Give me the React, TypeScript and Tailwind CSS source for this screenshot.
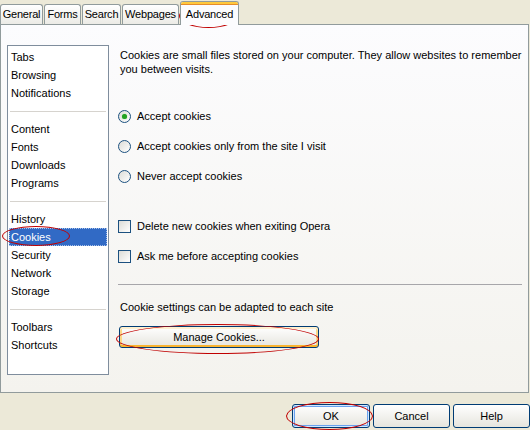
import React from "react";

const font = { fontFamily: '"Liberation Sans", Arial, sans-serif' };

const tabs = [
  { label: "General", w: "w-[43px]" },
  { label: "Forms", w: "w-[37px]" },
  { label: "Search", w: "w-[39px]" },
  { label: "Webpages", w: "w-[57px]" },
];

type Item = { label: string } | "sep";

const items: Item[] = [
  { label: "Tabs" },
  { label: "Browsing" },
  { label: "Notifications" },
  "sep",
  { label: "Content" },
  { label: "Fonts" },
  { label: "Downloads" },
  { label: "Programs" },
  "sep",
  { label: "History" },
  { label: "Cookies" },
  { label: "Security" },
  { label: "Network" },
  { label: "Storage" },
  "sep",
  { label: "Toolbars" },
  { label: "Shortcuts" },
];

function Radio({ checked, label }: { checked?: boolean; label: string }) {
  return (
    <div className="flex h-[16px] items-center">
      <span className="ml-[-2px] flex h-[13px] w-[13px] items-center justify-center rounded-full border border-[#1C5180] bg-gradient-to-br from-[#DCDCD7] to-white">
        {checked && <span className="h-[5px] w-[5px] rounded-full bg-[#21A121] shadow-[0_0_1px_#5CCB5C]" />}
      </span>
      <span className="ml-[6px]">{label}</span>
    </div>
  );
}

function Check({ label }: { label: string }) {
  return (
    <div className="flex h-[16px] items-center">
      <span className="ml-[-2px] h-[13px] w-[13px] border border-[#1C5180] bg-gradient-to-br from-[#DCDCD7] to-white" />
      <span className="ml-[6px]">{label}</span>
    </div>
  );
}

function XpButton({ children, className = "" }: { children: React.ReactNode; className?: string }) {
  return (
    <button
      type="button"
      className={`flex items-center justify-center rounded-[3px] border border-[#003C74] bg-gradient-to-b from-white to-[#E6E5DE] text-[11px] text-black ${className}`}
    >
      {children}
    </button>
  );
}

export default function App() {
  return (
    <div className="relative h-[430px] w-[530px] overflow-hidden bg-[#ECE9D8] text-[11px] text-black" style={font}>
      {/* Tab strip */}
      <div className="flex h-[24px] items-end gap-[1px]">
        {tabs.map((t) => (
          <div
            key={t.label}
            className={`${t.w} flex h-[20px] items-center justify-center whitespace-nowrap rounded-t-[3px] border border-b-0 border-[#919B9C] bg-gradient-to-b from-white to-[#ECEBE6] tracking-[-0.2px]`}
          >
            {t.label}
          </div>
        ))}
        <div className="relative z-10 mb-[-1px] flex h-[24px] w-[59px] flex-col rounded-t-[3px] border border-b-0 border-[#919B9C] bg-[#FCFCFE]">
          <div className="h-[3px] rounded-t-[2px] bg-[#FFC83C] shadow-[inset_0_-1px_0_#E68B2C]" />
          <div className="flex flex-1 items-center justify-center pb-[2px] tracking-[-0.2px]">Advanced</div>
        </div>
      </div>

      {/* Panel */}
      <div className="flex h-[369px] w-[529px] border border-[#919B9C] bg-gradient-to-b from-[#FCFCFE] to-[#F4F3EE] pl-[6px] pt-[20px]">
        <div className="h-[330px] w-[102px] border border-[#7F8D9D] bg-white pt-[2px]">
          {items.map((it, i) =>
            it === "sep" ? (
              <div key={i} className="flex h-[18px] items-center px-[2px]">
                <div className="h-px w-full bg-[#D6D3CE]" />
              </div>
            ) : it.label === "Cookies" ? (
              <div
                key={i}
                className="mx-px flex h-[18px] items-center border border-dotted border-[#A8C0E8] bg-[#316AC5] pl-[1px] text-white"
              >
                {it.label}
              </div>
            ) : (
              <div key={i} className="flex h-[18px] items-center pl-[3px]">
                {it.label}
              </div>
            )
          )}
        </div>

        <div className="ml-[11px] flex w-[403px] flex-col pt-[3px]">
          <p className="leading-[14px]">
            Cookies are small files stored on your computer. They allow websites to remember
            <br />
            you between visits.
          </p>

          <div className="mt-[32px] flex flex-col gap-[14px]">
            <Radio checked label="Accept cookies" />
            <Radio label="Accept cookies only from the site I visit" />
            <Radio label="Never accept cookies" />
          </div>

          <div className="mt-[34px] flex flex-col gap-[14px]">
            <Check label="Delete new cookies when exiting Opera" />
            <Check label="Ask me before accepting cookies" />
          </div>

          <div className="ml-[-2px] mt-[20px] h-px w-[404px] bg-[#A7A6AA]" />

          <div className="mt-[15px] leading-[14px]">Cookie settings can be adapted to each site</div>

          <XpButton className="ml-[-1px] mt-[12px] h-[22px] w-[200px] shadow-[inset_0_2px_0_#FFF0CF,inset_0_-2px_0_#F8B330,inset_2px_0_0_#FBD88A,inset_-2px_0_0_#FBD88A]">
            Manage Cookies...
          </XpButton>
        </div>
      </div>

      {/* Dialog buttons */}
      <div className="flex justify-end gap-[3px] pt-[11px]">
        <XpButton className="h-[24px] w-[78px] shadow-[inset_0_0_0_1px_#CEE7FF,inset_0_0_0_2px_#69A1EF]">OK</XpButton>
        <XpButton className="h-[24px] w-[77px]">Cancel</XpButton>
        <XpButton className="h-[24px] w-[77px]">Help</XpButton>
      </div>

      {/* Red annotation ellipses */}
      <div className="pointer-events-none absolute left-[179px] top-[4px] h-[24px] w-[59px] rounded-[50%] border border-[#C00000]" />
      <div className="pointer-events-none absolute left-[2px] top-[226px] h-[20px] w-[68px] rounded-[50%] border border-[#C00000]" />
      <div className="pointer-events-none absolute left-[116px] top-[324px] h-[30px] w-[203px] rounded-[50%] border border-[#C00000]" />
      <div className="pointer-events-none absolute left-[286px] top-[402px] h-[28px] w-[87px] rounded-[50%] border border-[#C00000]" />
    </div>
  );
}
